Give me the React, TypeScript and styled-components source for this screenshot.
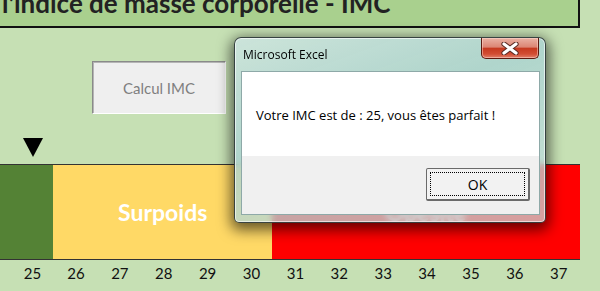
import styled, { createGlobalStyle } from 'styled-components';

const GlobalStyle = createGlobalStyle`
  html, body {
    margin: 0;
    padding: 0;
  }
  body {
    background: #c6e0b4;
    font-family: Lato, 'Open Sans', sans-serif;
    overflow: hidden;
  }
`;

const COLUMNS = '53px repeat(12, 43.9px)';

const Sheet = styled.div`
  position: relative;
  width: 600px;
  height: 291px;
  display: flex;
  flex-direction: column;
`;

const TitleBar = styled.div`
  width: 578px;
  height: 26px;
  flex-shrink: 0;
  background: #a9d08e;
  border-right: 2px solid #111;
  border-bottom: 2px solid #111;
  overflow: hidden;
  display: flex;
  align-items: flex-start;
`;

const Title = styled.h1`
  margin: -10px 0 0 2px;
  font-size: 26px;
  line-height: 26px;
  font-weight: 700;
  color: #222;
  white-space: nowrap;
`;

const ButtonRow = styled.div`
  display: flex;
  flex-shrink: 0;
  padding: 33px 0 0 92px;
`;

const SheetButton = styled.div`
  width: 134px;
  height: 53px;
  box-sizing: border-box;
  background: #efefef;
  border: 1px solid #fff;
  border-top-color: #8a8a8a;
  border-left-color: #8a8a8a;
  box-shadow: inset 1px 1px 0 #b5b5b5;
  display: flex;
  align-items: center;
  justify-content: center;
  color: #7f7f7f;
  font-size: 15px;
`;

const MarkerRow = styled.div`
  display: flex;
  align-items: flex-start;
  flex-shrink: 0;
  height: 50px;
  padding: 24px 0 0 23px;
  box-sizing: border-box;
`;

const Marker = styled.div`
  width: 0;
  height: 0;
  border-left: 10px solid transparent;
  border-right: 10px solid transparent;
  border-top: 19px solid #000;
`;

const Bar = styled.div`
  display: grid;
  grid-template-columns: ${COLUMNS};
  flex-shrink: 0;
  width: 580px;
  height: 96px;
  box-sizing: border-box;
  border-top: 1px solid #333;
  border-bottom: 1px solid #333;
  border-right: 1px solid #333;
`;

const Zone = styled.div<{ $bg: string; $span: number }>`
  grid-column: span ${(p) => p.$span};
  background: ${(p) => p.$bg};
  display: flex;
  align-items: center;
  justify-content: center;
  color: #fff;
  font-weight: 700;
  font-size: 23px;
`;

const Scale = styled.div`
  display: grid;
  grid-template-columns: ${COLUMNS};
  padding-top: 4px;
`;

const Tick = styled.div<{ $first?: boolean }>`
  text-align: center;
  padding-left: ${(p) => (p.$first ? '12px' : '2px')};
  font-size: 15px;
  line-height: 18px;
  color: #111;
`;

const Dialog = styled.div`
  position: absolute;
  left: 234px;
  top: 37px;
  width: 312px;
  height: 186px;
  box-sizing: border-box;
  border: 1px solid rgba(30, 40, 40, 0.85);
  border-radius: 7px 7px 5px 5px;
  background: linear-gradient(
    160deg,
    rgba(205, 228, 226, 0.82) 0%,
    rgba(170, 210, 210, 0.8) 40%,
    rgba(200, 225, 225, 0.7) 100%
  );
  backdrop-filter: blur(3px);
  box-shadow: 0 4px 14px 3px rgba(0, 0, 0, 0.6),
    inset 0 0 0 1px rgba(255, 255, 255, 0.6);
  padding: 0 5px 7px 6px;
  display: flex;
  flex-direction: column;
  font-family: 'Open Sans', 'Noto Sans', sans-serif;
`;

const DialogHead = styled.div`
  height: 33px;
  display: flex;
  justify-content: space-between;
  align-items: flex-start;
`;

const Caption = styled.div`
  padding: 8px 0 0 2px;
  font-size: 12px;
  color: #000;
`;

const CloseButton = styled.div`
  width: 58px;
  height: 21px;
  margin-right: 1px;
  box-sizing: border-box;
  border: 1px solid #5c1a10;
  border-top: none;
  border-radius: 0 0 5px 5px;
  background: linear-gradient(
    #eab2a4 0%,
    #dc8674 45%,
    #c63a20 52%,
    #d24d33 80%,
    #e0806a 100%
  );
  box-shadow: inset 0 0 0 1px rgba(255, 220, 210, 0.5);
  display: flex;
  align-items: center;
  justify-content: center;
`;

const Client = styled.div`
  flex: 1;
  display: flex;
  flex-direction: column;
  border: 1px solid #8ea9a8;
`;

const Message = styled.div`
  height: 84px;
  background: #fff;
  display: flex;
  align-items: center;
  padding: 2px 0 0 14px;
  box-sizing: border-box;
  font-size: 13px;
  color: #000;
`;

const Footer = styled.div`
  flex: 1;
  background: #f0f0f0;
  display: flex;
  justify-content: flex-end;
  align-items: flex-start;
  padding: 12px 9px 0 0;
`;

const OkButton = styled.div`
  position: relative;
  width: 104px;
  height: 33px;
  box-sizing: border-box;
  border: 1px solid #6a6a6a;
  border-right-width: 2px;
  border-bottom-width: 2px;
  border-radius: 2px;
  background: #f2f2f2;
  display: flex;
  align-items: center;
  justify-content: center;
  font-size: 14px;
  color: #000;

  &::after {
    content: '';
    position: absolute;
    inset: 3px;
    border: 1px dotted #000;
  }
`;

const CloseGlyph = () => (
  <svg width="18" height="13" viewBox="0 0 18 13">
    <path
      d="M3 2 L15 11 M15 2 L3 11"
      stroke="#5a2a22"
      strokeWidth="5.2"
      strokeLinecap="round"
      fill="none"
    />
    <path
      d="M3 2 L15 11 M15 2 L3 11"
      stroke="#fff"
      strokeWidth="3.2"
      strokeLinecap="round"
      fill="none"
    />
  </svg>
);

const ticks = [25, 26, 27, 28, 29, 30, 31, 32, 33, 34, 35, 36, 37];

export default function App() {
  return (
    <>
      <GlobalStyle />
      <Sheet>
        <TitleBar>
          <Title>l'indice de masse corporelle - IMC</Title>
        </TitleBar>
        <ButtonRow>
          <SheetButton>Calcul IMC</SheetButton>
        </ButtonRow>
        <MarkerRow>
          <Marker />
        </MarkerRow>
        <Bar>
          <Zone $bg="#548235" $span={1} />
          <Zone $bg="#ffd966" $span={5}>Surpoids</Zone>
          <Zone $bg="#ff0000" $span={7}>Obésité</Zone>
        </Bar>
        <Scale>
          {ticks.map((t, i) => (
            <Tick key={t} $first={i === 0}>
              {t}
            </Tick>
          ))}
        </Scale>

        <Dialog>
          <DialogHead>
            <Caption>Microsoft Excel</Caption>
            <CloseButton>
              <CloseGlyph />
            </CloseButton>
          </DialogHead>
          <Client>
            <Message>Votre IMC est de : 25, vous êtes parfait !</Message>
            <Footer>
              <OkButton>OK</OkButton>
            </Footer>
          </Client>
        </Dialog>
      </Sheet>
    </>
  );
}
